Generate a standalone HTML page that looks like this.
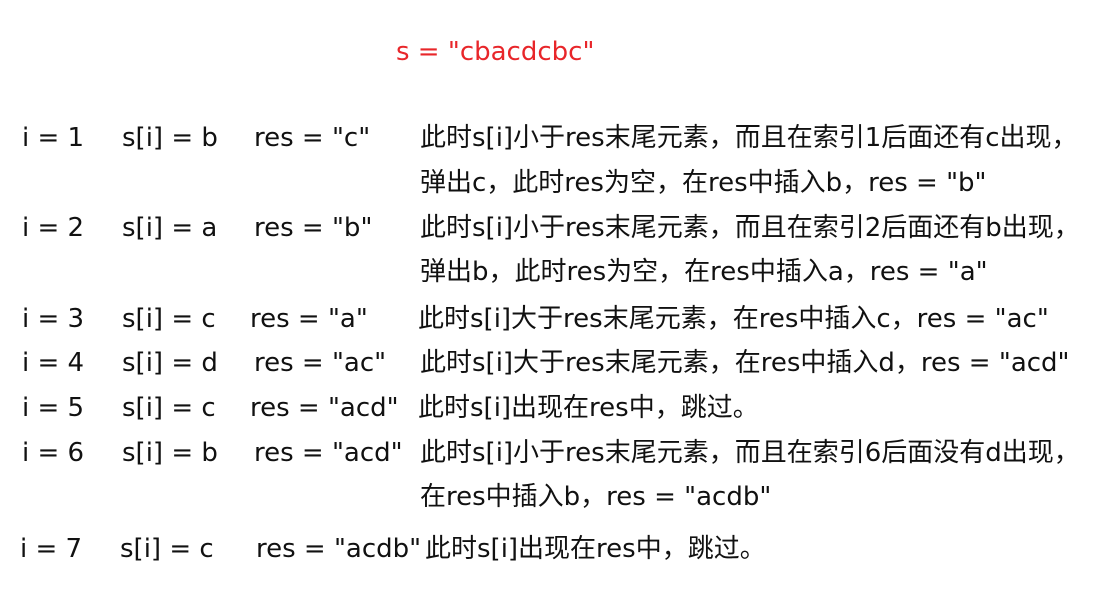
<!DOCTYPE html>
<html><head><meta charset="utf-8"><style>
body{margin:0;width:1106px;height:597px;background:#fff;position:relative;overflow:hidden;font-family:"DejaVu Sans","Noto Sans CJK SC",sans-serif;font-size:26px;color:#111}
div{position:absolute;white-space:nowrap;line-height:30px}
.r{color:#e8262a}
</style></head><body>
<div class="r" style="left:396px;top:37px">s = "cbacdcbc"</div>

<div style="left:22px;top:123px">i = 1</div><div style="left:122px;top:123px">s[i] = b</div><div style="left:254px;top:123px">res = "c"</div>
<div style="left:420px;top:123px">此时s[i]小于res末尾元素，而且在索引1后面还有c出现，</div>
<div style="left:420px;top:168px">弹出c，此时res为空，在res中插入b，res = "b"</div>

<div style="left:22px;top:213px">i = 2</div><div style="left:122px;top:213px">s[i] = a</div><div style="left:254px;top:213px">res = "b"</div>
<div style="left:420px;top:213px">此时s[i]小于res末尾元素，而且在索引2后面还有b出现，</div>
<div style="left:420px;top:257px">弹出b，此时res为空，在res中插入a，res = "a"</div>

<div style="left:22px;top:304px">i = 3</div><div style="left:122px;top:304px">s[i] = c</div><div style="left:250px;top:304px">res = "a"</div>
<div style="left:418px;top:304px">此时s[i]大于res末尾元素，在res中插入c，res = "ac"</div>

<div style="left:22px;top:348px">i = 4</div><div style="left:122px;top:348px">s[i] = d</div><div style="left:254px;top:348px">res = "ac"</div>
<div style="left:420px;top:348px">此时s[i]大于res末尾元素，在res中插入d，res = "acd"</div>

<div style="left:22px;top:393px">i = 5</div><div style="left:122px;top:393px">s[i] = c</div><div style="left:250px;top:393px">res = "acd"</div>
<div style="left:418px;top:393px">此时s[i]出现在res中，跳过。</div>

<div style="left:22px;top:438px">i = 6</div><div style="left:122px;top:438px">s[i] = b</div><div style="left:254px;top:438px">res = "acd"</div>
<div style="left:420px;top:438px">此时s[i]小于res末尾元素，而且在索引6后面没有d出现，</div>
<div style="left:420px;top:482px">在res中插入b，res = "acdb"</div>

<div style="left:20px;top:534px">i = 7</div><div style="left:120px;top:534px">s[i] = c</div><div style="left:256px;top:534px">res = "acdb"</div>
<div style="left:425px;top:534px">此时s[i]出现在res中，跳过。</div>
</body></html>
